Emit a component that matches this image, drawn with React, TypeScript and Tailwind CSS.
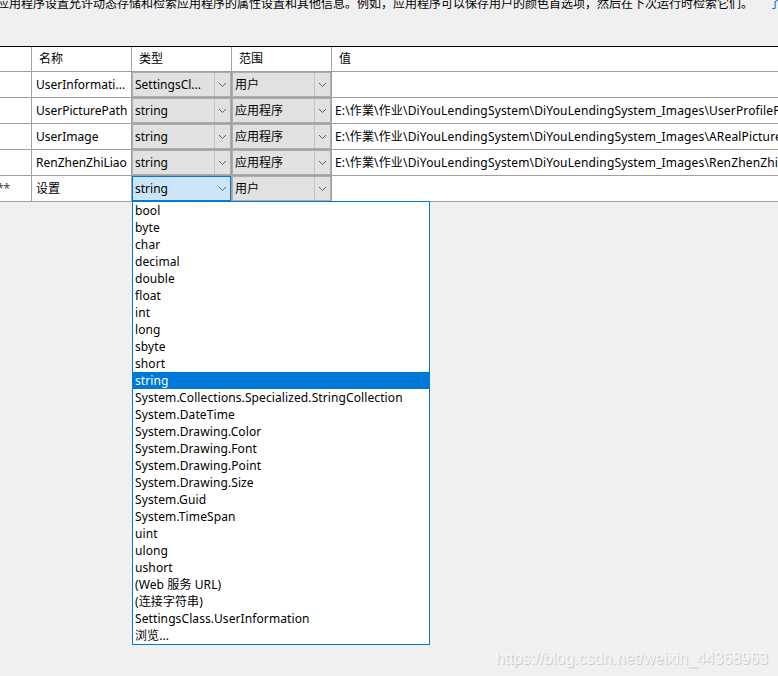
import React from 'react';

const rows = [
  { name: 'UserInformati...', type: 'SettingsCl...', scope: '用户', value: '' },
  { name: 'UserPicturePath', type: 'string', scope: '应用程序', value: 'E:\\作業\\作业\\DiYouLendingSystem\\DiYouLendingSystem_Images\\UserProfilePicture' },
  { name: 'UserImage', type: 'string', scope: '应用程序', value: 'E:\\作業\\作业\\DiYouLendingSystem\\DiYouLendingSystem_Images\\ARealPicture' },
  { name: 'RenZhenZhiLiao', type: 'string', scope: '应用程序', value: 'E:\\作業\\作业\\DiYouLendingSystem\\DiYouLendingSystem_Images\\RenZhenZhiLiao' },
];

const types = [
  'bool', 'byte', 'char', 'decimal', 'double', 'float', 'int', 'long', 'sbyte', 'short', 'string',
  'System.Collections.Specialized.StringCollection', 'System.DateTime', 'System.Drawing.Color',
  'System.Drawing.Font', 'System.Drawing.Point', 'System.Drawing.Size', 'System.Guid',
  'System.TimeSpan', 'uint', 'ulong', 'ushort', '(Web 服务 URL)', '(连接字符串)',
  'SettingsClass.UserInformation', '浏览...',
];

const gridCols = 'grid grid-cols-[32px_100px_100px_100px_1fr]';

function Chevron() {
  return (
    <svg width="9" height="6" viewBox="0 0 9 6" className="block">
      <path d="M1 1 L4.5 4.5 L8 1" fill="none" stroke="#606060" strokeWidth="1" />
    </svg>
  );
}

function Combo({ text, active }: { text: string; active?: boolean }) {
  return (
    <div
      className={`flex h-full w-full border ${
        active ? 'border-[#0078d7] bg-[#cce4f7]' : 'border-[#adadad] bg-[#e1e1e1]'
      }`}
    >
      <div className="flex-1 pl-[2px] leading-[23px] whitespace-nowrap overflow-hidden">{text}</div>
      <div
        className={`w-[16px] flex items-center justify-center ${
          active ? '' : 'border-l border-[#c4c4c4]'
        }`}
      >
        <Chevron />
      </div>
    </div>
  );
}

export default function App() {
  return (
    <div className="relative w-[778px] h-[676px] overflow-hidden bg-[#f0f0f0] text-[12px] text-black font-[Noto_Sans,Noto_Sans_CJK_SC,sans-serif]">
      {/* description */}
      <div className="flow-root h-[46px]">
        <div className="-mt-[5px] -ml-[3px] leading-[16px] whitespace-nowrap font-[Noto_Sans_CJK_SC,sans-serif]">
          应用程序设置允许动态存储和检索应用程序的属性设置和其他信息。例如，应用程序可以保存用户的颜色首选项，然后在下次运行时检索它们。
          <span className="ml-[16px] text-[#0066cc]">了解更多</span>
        </div>
      </div>

      {/* settings grid */}
      <div className="border-t border-black bg-white">
        <div className={`${gridCols} h-[25px]`}>
          <div className="border-r border-b border-[#a0a0a0]" />
          <div className="border-r border-b border-[#a0a0a0] pl-[7px] leading-[24px]">名称</div>
          <div className="border-r border-b border-[#a0a0a0] pl-[7px] leading-[24px]">类型</div>
          <div className="border-r border-b border-[#a0a0a0] pl-[7px] leading-[24px]">范围</div>
          <div className="border-b border-[#a0a0a0] pl-[7px] leading-[24px]">值</div>
        </div>

        {rows.map((r) => (
          <div key={r.name} className={`${gridCols} h-[26px]`}>
            <div className="border-r border-b border-[#a0a0a0]" />
            <div className="border-r border-b border-[#a0a0a0] pl-[4px] leading-[25px] whitespace-nowrap overflow-hidden">
              {r.name}
            </div>
            <div className="border-r border-b border-[#a0a0a0]">
              <Combo text={r.type} />
            </div>
            <div className="border-r border-b border-[#a0a0a0]">
              <Combo text={r.scope} />
            </div>
            <div className="border-b border-[#a0a0a0] pl-[3px] leading-[25px] whitespace-nowrap overflow-hidden tracking-[0.15px]">
              {r.value}
            </div>
          </div>
        ))}

        {/* new row */}
        <div className={`${gridCols} h-[26px]`}>
          <div className="border-r border-b border-[#a0a0a0] -ml-[3px] leading-[25px] text-[#404040] overflow-hidden">**</div>
          <div className="border-r border-b border-[#a0a0a0] pl-[4px] leading-[25px]">设置</div>
          <div className="border-r border-b border-[#a0a0a0]">
            <Combo text="string" active />
          </div>
          <div className="border-r border-b border-[#a0a0a0]">
            <Combo text="用户" />
          </div>
          <div className="border-b border-[#a0a0a0]" />
        </div>
      </div>

      {/* open type dropdown */}
      <div className="absolute left-[132px] top-[201px] w-[298px] border border-[#0078d7] bg-white">
        {types.map((t) => (
          <div
            key={t}
            className={`h-[17px] px-[2px] leading-[17px] whitespace-nowrap tracking-[0.1px] ${
              t === 'string' ? 'bg-[#0078d7] text-white' : ''
            }`}
          >
            {t}
          </div>
        ))}
      </div>

      {/* watermark */}
      <div className="absolute right-[10px] top-[647px] text-[16px] text-[#f7f7f7] font-[Liberation_Sans,Arial,sans-serif] [text-shadow:1px_1px_1px_rgba(0,0,0,0.18)]">
        https://blog.csdn.net/weixin_44368963
      </div>
    </div>
  );
}
